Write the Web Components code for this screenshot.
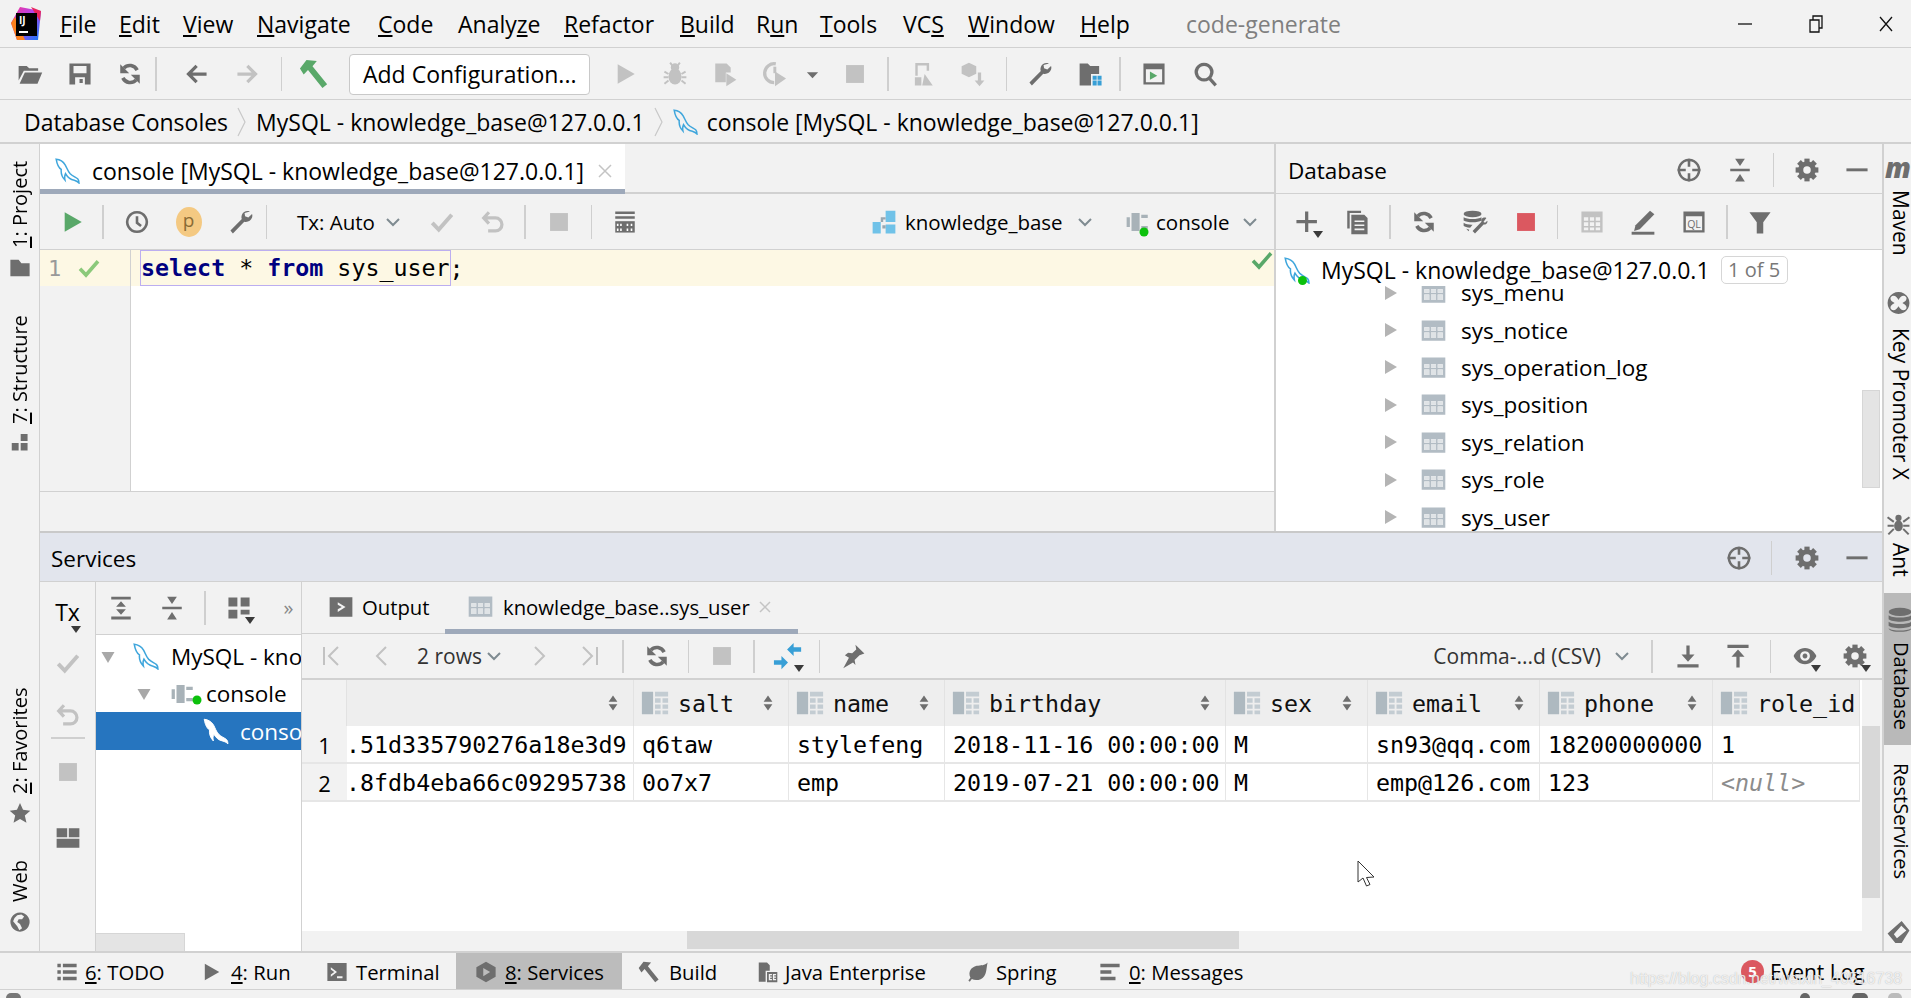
<!DOCTYPE html>
<html>
<head>
<meta charset="utf-8">
<title>code-generate</title>
<style>
    html, body { margin: 0; height: 100%; overflow: hidden; background: #f2f2f2; }
    body { font: 23px "Open Sans", "Noto Sans", sans-serif; color: #000; }
</style>
</head>
<body>
<ide-app>
    <title-bar></title-bar>

    <tool-bar style="height:52px;padding:1px 0 0 5px;border-bottom:1px solid #d1d1d1">
        <icon-btn icon="open"></icon-btn><icon-btn icon="save"></icon-btn><icon-btn icon="sync"></icon-btn>
        <tool-sep style="margin-right:14px"></tool-sep>
        <icon-btn icon="back"></icon-btn><icon-btn icon="forward" dim style="margin-left:2px"></icon-btn>
        <tool-sep style="margin:0 7px 0 8px"></tool-sep>
        <icon-btn icon="hammer" color="#59a869" size="30"></icon-btn>
        <config-button style="margin-left:10px">Add Configuration...</config-button>
        <icon-btn icon="play" dim style="margin-left:10px"></icon-btn>
        <icon-btn icon="bug" dim></icon-btn><icon-btn icon="coverage" dim></icon-btn><icon-btn icon="profiler" dim></icon-btn>
        <icon-btn icon="drop" w="24" color="#6e6e6e"></icon-btn>
        <icon-btn icon="stop" dim style="margin-left:6px"></icon-btn>
        <tool-sep style="margin:0 9px 0 7px"></tool-sep>
        <icon-btn icon="device" dim></icon-btn><icon-btn icon="pkgdown" dim></icon-btn>
        <tool-sep style="margin:0 8px"></tool-sep>
        <icon-btn icon="wrench"></icon-btn><icon-btn icon="structure" style="margin-left:1px"></icon-btn>
        <tool-sep style="margin:0 8px 0 3px"></tool-sep>
        <icon-btn icon="runany"></icon-btn><icon-btn icon="search" style="margin-left:2px"></icon-btn>
    </tool-bar>

    <nav-bar>
        <nav-crumb>Database Consoles</nav-crumb>
        <nav-crumb sep>MySQL - knowledge_base@127.0.0.1</nav-crumb>
        <nav-crumb sep icon>console [MySQL - knowledge_base@127.0.0.1]</nav-crumb>
    </nav-bar>

    <ide-body>
        <side-stripe slot="left" flip>
            <stripe-label flip style="margin-top:16px;height:88px"><u>1</u>: Project</stripe-label>
            <ide-icon name="folder" size="22" style="margin-top:9px"></ide-icon>
            <stripe-label flip style="margin-top:36px;height:110px"><u>7</u>: Structure</stripe-label>
            <ide-icon name="squares" size="22" style="margin-top:7px"></ide-icon>
            <stripe-label flip style="margin-top:234px;height:106px"><u>2</u>: Favorites</stripe-label>
            <ide-icon name="star" size="22" style="margin-top:8px"></ide-icon>
            <stripe-label flip style="margin-top:36px;height:43px">Web</stripe-label>
            <ide-icon name="globe" size="22" style="margin-top:8px"></ide-icon>
        </side-stripe>

        <top-split>
            <editor-pane></editor-pane>
            <database-pane></database-pane>
        </top-split>
        <services-pane></services-pane>

        <side-stripe slot="right">
            <stripe-m style="margin-top:15px"></stripe-m>
            <stripe-label style="margin-top:13px;height:63px">Maven</stripe-label>
            <ide-icon name="keyx" size="26" style="margin-top:37px"></ide-icon>
            <stripe-label style="margin-top:12px;height:149px">Key Promoter X</stripe-label>
            <ide-icon name="ant" size="26" style="margin-top:35px"></ide-icon>
            <stripe-label style="margin-top:5px;height:32px">Ant</stripe-label>
            <stripe-active style="margin-top:18px">
                <ide-icon name="dbstack" size="26" style="margin:14px 0 0 3px"></ide-icon>
                <stripe-label style="margin-top:9px;height:85px;font-size:20px">Database</stripe-label>
            </stripe-active>
            <stripe-label style="margin-top:18px;height:115px;font-size:20px">RestServices</stripe-label>
            <ide-icon name="rest" size="26" style="margin-top:41px"></ide-icon>
        </side-stripe>
    </ide-body>

    <bottom-bar>
        <bar-item icon="list" style="width:200px;padding-left:56px;gap:7px"><u>6</u>: TODO</bar-item>
        <bar-item icon="play" style="width:126px;gap:9px"><u>4</u>: Run</bar-item>
        <bar-item icon="terminal" style="width:130px;gap:8px">Terminal</bar-item>
        <bar-item icon="services" active style="width:166px;padding-left:19px;gap:8px"><u>8</u>: Services</bar-item>
        <bar-item icon="hammer" style="width:134px;padding-left:16px;gap:9px">Build</bar-item>
        <bar-item icon="javaee" style="width:211px;gap:7px">Java Enterprise</bar-item>
        <bar-item icon="leaf" style="width:132px;gap:7px">Spring</bar-item>
        <bar-item icon="messages" style="gap:8px"><u>0</u>: Messages</bar-item>
        <event-log style="margin-left:auto">Event Log</event-log>
    </bottom-bar>
    <status-strip></status-strip>
    <water-mark>https://blog.csdn.net/weixin_40516738</water-mark>
    <mouse-cursor></mouse-cursor>
</ide-app>

<script>
(() => {
    'use strict';
    const UI = '"Open Sans", "Noto Sans", sans-serif';
    const MONO = '"DejaVu Sans Mono", "Liberation Mono", monospace';

    // 16x16 icons, same grid as the IDE's own set
    const line = (d, w = 2) => `<path d="${d}" fill="none" stroke="currentColor" stroke-width="${w}"/>`;
    const dolphin = 'M1.5 1.5c2 .2 3.8 1.3 4.8 3 .9 1.6 1.3 3.3 2.7 4.8 1.3 1.3 3 1.8 4 2.7.5.5.7 1.2.7 2.2-.7-.8-1.6-1.1-2.5-1.4-2.5-.5-3.8-2-4.7-3.6-.5 1-.6 2-.3 3.5C4.6 11 4 9 4.2 7 3 6.3 2 4.5 1.5 1.5z';
    const gearBody = '<mask id="g"><g fill="#fff"><circle cx="8" cy="8" r="5.4"/><rect x="6.4" y="1" width="3.2" height="14"/><rect x="6.4" y="1" width="3.2" height="14" transform="rotate(45 8 8)"/><rect x="6.4" y="1" width="3.2" height="14" transform="rotate(90 8 8)"/><rect x="6.4" y="1" width="3.2" height="14" transform="rotate(135 8 8)"/></g><circle cx="8" cy="8" r="2.3" fill="#000"/></mask><rect width="16" height="16" mask="url(#g)"/>';
    const ICONS = {
        open: '<path d="M1 3h5l1.5 1.5H13V6H4.2L1 12z"/><path d="M4.8 7h10.7l-2.9 7H1.6z"/>',
        save: '<path fill-rule="evenodd" d="M1.5 1.5h13v13h-13zM4 3v4.5h8V3zM5 10v4.5h6V10zM7.7 11h2v2.5h-2z"/>',
        sync: line('M12.4 5.6A5 5 0 0 0 4.2 4.4', 2.2) + line('M3.6 10.4a5 5 0 0 0 8.2 1.2', 2.2) + '<path d="M2 2v5.500h5.500zM14 14V8.500H8.500z"/>',
        back: line('M14.5 8H4M8.4 3 3.4 8l5 5'),
        forward: line('M1.5 8H12M7.6 3l5 5-5 5'),
        hammer: '<path d="M4 .5 9.500 1 7.200 3.800 15 13.500 12.500 15.500 4.800 5.800 2.500 8.300.5 5z"/>',
        play: '<path d="M3.5 2 14 8 3.5 14z"/>',
        bug: '<ellipse cx="8" cy="9.5" rx="4" ry="5"/><circle cx="8" cy="4" r="2.6"/>' + line('M1.5 6.5 4 8M14.5 6.5 12 8M1 10h3M15 10h-3M1.5 14 4 12M14.5 14 12 12M5 1l1.5 2M11 1 9.500 3', 1.2),
        coverage: '<path d="M2 1.500h7l2.500 2.500V7H8.500v6H2z"/><path d="M8.800 7.500 15 11.500l-6.200 4z"/>',
        profiler: line('M8.500 1.800a5.800 5.800 0 1 0-1 11.500', 2) + '<path d="M7 3.500h1.800v4H7z"/><path d="M8 6.500l6.800 4.300L8 15.500z"/>',
        drop: '<path d="M2 5.500h12L8 12z"/>',
        stop: '<path d="M2.500 2.500h11v11h-11z"/>',
        device: line('M4 9V2h7v4', 1.5) + '<path d="M3 10h4v5H3zM9 8l5 7H7.500z"/>',
        pkgdown: '<path d="M5.500 1 10 3.200v4.600L5.500 10 1 7.800V3.200z"/><path d="M11 7h2v5h2l-3 3.500L9 12h2z"/>',
        wrench: '<path d="M13.500 1.500c-2-.8-4.300.2-5 2.200-.3 1-.3 1.800 0 2.500L1.500 13.200 3 15l7-7.200c2 .5 4.200-.5 4.800-2.500.3-1 .2-1.700 0-2.300l-2.300 2.300-2-.8-.3-2z"/>',
        structure: '<path d="M1 1.500h5L7.500 3H13v5H8v7H1z"/><path fill="#389fd6" d="M9 9h2.500v2.500H9zM12 9h2.500v2.500H12zM9 12h2.500v3H9zM12 12h2.500v3H12z"/>',
        runany: '<path fill-rule="evenodd" d="M1.500 1.500h13v13h-13zM3 5v8h10V5z"/><path fill="#59a869" d="M5.500 6.500 10 9l-4.500 2.500z"/>',
        search: line('M6.800 2a4.800 4.800 0 1 0 .01 0M10 10.500l4 4.500'),
        history: line('M8 2a6 6 0 1 0 .01 0M8 4.500V8.500l2.500 2', 1.600),
        check: line('M2 8.500l4 4.200L14 3.500', 2.400),
        undo: line('M5.500 2 2.300 5.500 5.500 9M2.500 5.500h7a4 4 0 0 1 0 8H5'),
        results: '<path d="M2 1.500h12V3H2zM2 4.500h12V6H2z"/><path d="M2 7.500h12v7H2z"/><path fill="#fff" d="M5 9h1v1.500H5zM9 9h1v1.500H9zM5 12h1v1.500H5zM9 12h1v1.500H9zM3 9h1v1.500H3zM11.500 9h1v1.500h-1zM3 12h1v1.500H3zM11.500 12h1v1.500h-1z"/>',
        schema: '<path fill="#70c2e8" d="M1 8h5v7H1zM9 1h6v7H9zM9 9.500h6V15H9z"/><path fill="#9aa7b0" d="M6 5h3v1.500H7.500V8H6zM7 10h2v2H7z"/>',
        plug: '<path d="M1 5h2v6H1zM4 2.500h5v11H4zM10 3.500h4v2h-4zM10 10.500h4v2h-4z"/>',
        target: line('M8 1.800a6.200 6.200 0 1 0 .01 0', 1.500) + '<path d="M7.200 1h1.600v5H7.200zM7.200 10h1.600v5H7.200zM1 7.200h5v1.600H1zM10 7.200h5v1.600h-5z"/>',
        collapse: '<path d="M5 1h6L8 5.500zM2 7.200h12v1.600H2zM8 10.500l3 4.500H5z"/>',
        expand: '<path d="M2 1h12v1.800H2zM2 13.200h12V15H2zM8 3.800l3 3.400H5zM8 12.200 5 8.800h6z"/>',
        gear: gearBody,
        minus: '<path d="M1.500 7h13v1.800h-13z"/>',
        plus: '<path d="M6.800 1.500h2v5.300h5.300v2H8.800v5.300h-2V8.800H1.500v-2h5.300z"/>',
        copy: '<path fill-rule="evenodd" d="M4.500 3.500h8l2 2v10h-10zM6.500 7v1h6V7zM6.500 9.500v1h6v-1zM6.500 12v1h6v-1z"/><path d="M2 1h8.500v1.500H3.500V12H2z"/>',
        dbtool: '<ellipse cx="6.500" cy="3" rx="5.500" ry="2"/><path d="M1 5c2 1.500 9 1.500 11 0v2c-2 1.500-9 1.500-11 0zM1 8.500c1.500 1 3.500 1.300 5.500 1.200L5 11.500c-2 0-3.200-.6-4-1.200zM2.500 12c.8.500 1.500.6 2 .7l-.5 1z"/><path d="M15 5.500c-.8-.5-2.200-.3-2.800.5-.4.600-.4 1.200-.2 1.800L6.500 13.500 8 15l5.300-5.500c.8.200 1.800 0 2.200-1 .2-.5.200-1 .1-1.300l-1.400 1.300-1-.5z"/>',
        grid: '<path fill-rule="evenodd" d="M1.500 1.500h13v13h-13zM3 5v2.200h2.700V5zM6.700 5v2.200h2.600V5zM10.300 5v2.200H13V5zM3 8.200v2.200h2.700V8.200zM6.700 8.200v2.200h2.600V8.200zM10.300 8.200v2.200H13V8.200zM3 11.400V13h2.700v-1.600zM6.700 11.400V13h2.600v-1.600zM10.300 11.400V13H13v-1.600z"/>',
        edit: '<path d="M12.300 1 15 3.300 6 12.500l-3.500 1 .9-3.500z"/><path d="M1 14h14v1.800H1z"/>',
        ql: '<path fill-rule="evenodd" d="M1.500 1.500h13v13h-13zM3 4.500V13h10V4.500z"/><text x="8" y="11.500" font-size="6.500" text-anchor="middle" font-family="Open Sans, sans-serif">QL</text>',
        filter: '<path d="M1.500 2h13L10 8.200V15H6V8.200z"/>',
        table: '<path fill="#b2bcc4" fill-rule="evenodd" d="M1 2h14v12H1zM2.500 6v2.200h3V6zM6.500 6v2.200h3V6zM10.500 6v2.200h3V6zM2.500 9.200v3.300h3V9.200zM6.500 9.200v3.300h3V9.200zM10.500 9.200v3.300h3V9.200z"/><path fill="#dfe3e6" d="M2.500 6h3v2.200h-3zM6.500 6h3v2.200h-3zM10.500 6h3v2.200h-3zM2.500 9.200h3v3.300h-3zM6.500 9.200h3v3.300h-3zM10.500 9.200h3v3.300h-3z"/>',
        column: '<path fill="#aeb9c0" d="M1 2h6v12H1z"/><path fill="#c3ccd2" d="M8 2h7v2.500H8zM8 5.500h3v2.300H8zM12 5.500h3v2.300h-3zM8 8.800h3v2.300H8zM12 8.800h3v2.300h-3zM8 12h3v2H8zM12 12h3v2h-3z"/>',
        sort: '<path d="M8 2l3.500 5h-7zM8 14 4.500 9h7z"/>',
        output: '<path fill-rule="evenodd" d="M1 2h14v12H1zM6 5v1.600L8.500 8 6 9.400V11l4.800-3z"/>',
        folder: '<path d="M1 2h6l2 2.500h6V14H1z"/>',
        squares: '<path d="M8.500 1.500h5v5h-5zM2 8h5v5.500H2zM8.500 8h5v5.500h-5z"/>',
        group: '<path d="M1.500 1.500h5.500v5.500H1.500zM9 1.500h5.500v5.500H9zM1.500 9h5.500v5.500H1.500zM9 9h5.500v3H9z"/>',
        layout: '<path d="M1 2h6.500v5.500H1zM8.500 2H15v5.500H8.500zM1 8.500h14V14H1z"/>',
        merge: '<path fill="#389fd6" d="M7.500 4.500 11 1v7zM10.500 3.300h4.500v2.400h-4.500zM8 11.500 4.500 15V8zM.5 10.300H5v2.400H.5z"/>',
        star: '<path d="M8 .8 10.200 5.700l5.300.6-4 3.500 1.200 5.200L8 12.300 3.300 15l1.200-5.200-4-3.500 5.300-.6z"/>',
        globe: '<path fill-rule="evenodd" d="M8 1a7 7 0 1 0 .01 0zM6 3l3-.5 2 1.500-1.500 2H7l-1 2 2 1.500 1.500 3-2 1.500L6 11 3 7.500 4 5z"/>',
        keyx: '<path fill-rule="evenodd" d="M8 1a7 7 0 1 0 .01 0zM4 3.500C6 3 7 4.500 8 6c1-1.500 2-3 4-2.500 1.500.5 1.500 2.500 0 3.500L10.500 8 12 9c1.500 1 1.500 3 0 3.500-2 .5-3-1-4-2.500-1 1.500-2 3-4 2.500C2.500 12 2.500 10 4 9l1.500-1L4 7C2.500 6 2.500 4 4 3.500z"/>',
        ant: '<ellipse cx="8" cy="8.500" rx="2.800" ry="3.500"/><circle cx="8" cy="3.500" r="2"/>' + line('M1 3l4 3M15 3l-4 3M1 8.500h4M15 8.500h-4M1.500 14 5 10.500M14.500 14 11 10.500', 1.300),
        dbstack: '<ellipse cx="8" cy="3" rx="7" ry="2.500"/><path d="M1 5c2 2 12 2 14 0v2.500c-2 2-12 2-14 0zM1 9c2 2 12 2 14 0v2.500c-2 2-12 2-14 0zM1 13c2 2 12 2 14 0 0 3-14 3-14 0z"/>',
        rest: '<path fill-rule="evenodd" d="M10 1 15 7l-5 8H6L1 9zM9.800 4 5 9.500 7 12l6-5z"/>',
        list: '<path d="M1 2h2.500v2.500H1zM5 2h10v2.500H5zM1 6.700h2.500v2.500H1zM5 6.700h10v2.500H5zM1 11.500h2.500V14H1zM5 11.500h10V14H5z"/>',
        terminal: '<path fill-rule="evenodd" d="M1 1.500h14v13H1zM3.500 4.500v1.600L6 8 3.500 9.800v1.700L8 8zM8 11v1.500h4V11z"/>',
        services: '<path fill-rule="evenodd" d="M8 .5 15 4.500v7l-7 4-7-4v-7zM6 5v6l5-3z"/>',
        javaee: '<path d="M2 1h6l2 2v4H7v8H2z"/><path fill-rule="evenodd" d="M8 8h7.500v7.500H8zM9.300 9.500v4.500h2.300v-1h-1.300v-.8h1.200v-.9h-1.200v-.9h1.300v-.9zM12.300 9.500v4.500h2.300v-1h-1.300v-.8h1.200v-.9h-1.200v-.9h1.300v-.9z"/>',
        leaf: '<path d="M15 1c-1 4-.5 7-2.500 10C10.500 14 6 14.500 3.500 13L2 15l-1-.8 1.500-2C.5 8 3 4.500 7 3.500c3-.7 6 0 8-2.500z"/>',
        messages: '<path d="M1 2h14v2.500H1zM1 6.700h8v2.500H1zM1 11.500h11V14H1z"/>',
        dolphin: `<g transform="translate(-1 -1) scale(1.15)"><path d="${dolphin}" fill="none" stroke="#3fa6dc" stroke-width=".8"/></g>`,
        dolphinw: `<g transform="translate(-1 -1) scale(1.15)"><path d="${dolphin}" fill="#fff" stroke="#fff" stroke-width=".5"/></g>`,
        tri: '<path d="M3 2l10 6-10 6z"/>',
        tridown: '<path d="M1.500 3h13L8 14z"/>',
        download: '<path d="M7 1.500h2V7h3l-4 4.500L4 7h3zM1.500 13h13v2h-13z"/>',
        upload: '<path d="M1.500 1h13v2h-13zM8 4l4 4.500H9V15H7V8.500H4z"/>',
        eye: '<path fill-rule="evenodd" d="M8 3c3.500 0 6 2.500 7 5-1 2.500-3.500 5-7 5s-6-2.500-7-5c1-2.500 3.500-5 7-5zm0 2a3 3 0 1 0 .01 0zm0 1.500a1.500 1.500 0 1 1-.01 0z"/>',
        pin: '<path d="M9.500 1 15 6.500l-3 1-3 3 .5 3L8 12 2 15.500 5.500 9 3 7.500l2-1.500 2.500.3 2.500-2.300z"/>'
    };

    const define = (name, css, html, onConnect) => {
        customElements.define(name, class extends HTMLElement {
            connectedCallback() {
                if (this.shadowRoot) return;
                const root = this.attachShadow({mode: 'open'});
                const body = typeof html === 'function' ? html(this) : html;
                root.innerHTML = `<style>${css}</style>${body}`;
                if (onConnect) onConnect(this, root);
            }
        });
    };

    define('ide-icon', `
        :host { display: inline-flex; flex: none; color: #6e6e6e; }
        svg { display: block; fill: currentColor; }
    `, el => {
        const size = el.getAttribute('size') || 26;
        if (el.getAttribute('color')) el.style.color = el.getAttribute('color');
        return `<svg width="${size}" height="${size}" viewBox="0 0 16 16">${ICONS[el.getAttribute('name')] || ''}</svg>`;
    });

    define('icon-btn', `
        :host { position: relative; display: flex; flex: none; align-items: center; justify-content: center; width: 50px; height: 100%; }
        ::slotted(svg) { flex: none; }
        .caret { position: absolute; left: calc(50% + 6px); top: calc(50% + 9px); width: 0; height: 0;
                 border: 5px solid transparent; border-top: 7px solid #3a3a3a; border-bottom: 0; }
    `, el => {
        if (el.getAttribute('w')) el.style.width = el.getAttribute('w') + 'px';
        const color = el.hasAttribute('dim') ? '#c2c2c2' : (el.getAttribute('color') || '#6e6e6e');
        const size = el.getAttribute('size') || 26;
        const name = el.getAttribute('icon');
        let icon = '';
        if (name === 'drop') icon = `<ide-icon name="drop" size="15" color="${color}"></ide-icon>`;
        else if (name) icon = `<ide-icon name="${name}" size="${size}" color="${color}"></ide-icon>`;
        return icon + '<slot></slot>' + (el.hasAttribute('caret') ? '<span class="caret"></span>' : '');
    });

    define('tool-bar', `
        :host { display: flex; align-items: center; box-sizing: border-box; font: 20px ${UI}; }
    `, '<slot></slot>');

    define('tool-sep', `
        :host { display: block; flex: none; width: 1.5px; height: 34px; background: #cfcfcf; }
    `, '');

    define('ide-app', `
        :host { position: relative; display: flex; flex-direction: column; width: 1911px; height: 998px; overflow: hidden; }
    `, '<slot></slot>');

    define('title-bar', `
        :host { display: flex; align-items: center; flex: none; height: 48px; box-sizing: border-box; border-bottom: 1.500px solid #d1d1d1; }
        .logo { width: 60px; flex: none; padding-left: 11px; box-sizing: border-box; }
        .logo svg { display: block; }
        .menu { display: grid; grid-template-columns: 59px 64px 74px 121px 80px 106px 116px 76px 64px 83px 65px 112px 106px; font: 23px ${UI}; }
        .title { color: #7f7f7f; font: 23px ${UI}; }
        .win { margin-left: auto; display: grid; grid-template-columns: 50px 91px 50px; align-items: center; justify-items: center; }
        svg.w { fill: none; stroke: #111; stroke-width: 1.300; }
        u { text-underline-offset: 2px; }
    `, `
        <div class="logo"><svg width="30" height="33" viewBox="0 0 30 33">
            <defs><linearGradient id="a" x1="0" y1="0" x2="1" y2="1"><stop offset="0" stop-color="#f9328b"/><stop offset=".45" stop-color="#b345f1"/><stop offset="1" stop-color="#0d7bf7"/></linearGradient></defs>
            <path d="M9 0 30 4 27 33 6 33 0 16z" fill="url(#a)"/><path d="M0 16 6 33 14 33 4 10z" fill="#fc801d"/><path d="M20 0 30 4 29 14z" fill="#e9255f"/>
            <rect x="5" y="6" width="21" height="23"/><text x="8" y="17" font-size="10" font-weight="700" fill="#fff" font-family="Open Sans, sans-serif">IJ</text><rect x="8" y="24" width="9" height="2" fill="#fff"/>
        </svg></div>
        <div class="menu">
            <span><u>F</u>ile</span><span><u>E</u>dit</span><span><u>V</u>iew</span><span><u>N</u>avigate</span><span><u>C</u>ode</span><span>Analy<u>z</u>e</span><span><u>R</u>efactor</span><span><u>B</u>uild</span><span>R<u>u</u>n</span><span><u>T</u>ools</span><span>VC<u>S</u></span><span><u>W</u>indow</span><span><u>H</u>elp</span>
        </div>
        <span class="title">code-generate</span>
        <div class="win">
            <svg class="w" width="16" height="16" viewBox="0 0 16 16"><path d="M1 8h14"/></svg>
            <svg class="w" width="16" height="18" viewBox="0 0 16 18"><path d="M2 5h9v12H2zM5 5V1h9v12h-3"/></svg>
            <svg class="w" width="16" height="18" viewBox="0 0 16 18"><path d="M2 2l12 14M14 2 2 16"/></svg>
        </div>
    `);

    define('config-button', `
        :host { display: flex; align-items: center; box-sizing: border-box; width: 241px; height: 41px; padding-left: 13px;
                background: #fff; border: 1.500px solid #c9c9c9; border-radius: 4px; font: 23px ${UI}; white-space: nowrap; }
    `, '<slot></slot>');

    define('nav-bar', `
        :host { display: flex; align-items: center; flex: none; height: 44px; box-sizing: border-box; padding: 2px 0 0 24px;
                border-bottom: 2px solid #d1d1d1; font: 23px ${UI}; }
    `, '<slot></slot>');

    define('nav-crumb', `
        :host { display: flex; align-items: center; white-space: nowrap; }
        .sep { margin: 0 10px 0 9px; flex: none; }
        .ic { margin: 0 8px 0 0; }
    `, el => `${el.hasAttribute('sep') ? '<svg class="sep" width="9" height="30" viewBox="0 0 9 30"><path d="M1 1l7 14-7 14" fill="none" stroke="#c8c8c8" stroke-width="1.200"/></svg>' : ''}${el.hasAttribute('icon') ? '<ide-icon class="ic" name="dolphin" size="26"></ide-icon>' : ''}<slot></slot>`);

    define('ide-body', `
        :host { display: grid; flex: 1; min-height: 0; grid-template-columns: 40px 1fr 29px; grid-template-rows: 389px minmax(0, 1fr); }
        ::slotted([slot=left]) { grid-row: 1 / 3; grid-column: 1; }
        ::slotted([slot=right]) { grid-row: 1 / 3; grid-column: 3; }
    `, `<slot name="left"></slot><slot></slot><slot name="right"></slot>`);

    define('side-stripe', `
        :host { display: flex; flex-direction: column; align-items: center; box-sizing: border-box; min-width: 0; overflow: hidden; font: 20px ${UI}; }
        :host([slot=left]) { border-right: 1.500px solid #d1d1d1; }
        :host([slot=right]) { border-left: 2px solid #d1d1d1; align-items: stretch; font-size: 21px; }
        :host([slot=right]) ::slotted(ide-icon) { margin-left: 2px; }
        :host([slot=right]) ::slotted(stripe-label) { width: 20px; line-height: 20px; margin-left: 7px; }
    `, '<slot></slot>');

    define('stripe-label', `
        :host { display: block; flex: none; writing-mode: vertical-rl; white-space: nowrap; text-align: center; line-height: 30px; width: 30px; }
        :host([flip]) { transform: rotate(180deg); }
    `, '<slot></slot>');

    define('stripe-m', `
        :host { display: block; flex: none; height: 18px; padding-left: 1px; color: #6e6e6e; font: italic 800 28px/16px ${UI}; }
    `, 'm');

    define('stripe-active', `
        :host { display: flex; flex-direction: column; align-items: flex-start; flex: none; height: 152px; background: #b9b9b9; }
        ::slotted(stripe-label) { width: 20px; line-height: 20px; margin-left: 7px; }
    `, '<slot></slot>');

    define('top-split', `
        :host { display: flex; min-width: 0; min-height: 0; border-bottom: 2px solid #c9c9c9; }
    `, '<slot></slot>');

    define('editor-pane', `
        :host { display: flex; flex-direction: column; width: 1236px; flex: none; box-sizing: border-box; border-right: 2px solid #d1d1d1; }
        .tabs { display: flex; height: 50px; flex: none; border-bottom: 2px solid #d1d1d1; box-sizing: border-box; }
        .tab { display: flex; align-items: center; box-sizing: border-box; width: 585px; height: 50px; padding: 8px 0 0 15px; gap: 11px;
               background: #fff; border-bottom: 5px solid #9ea9ba; font: 23px ${UI}; white-space: nowrap; }
        .x { margin-left: 3px; }
        tool-bar { height: 56px; flex: none; padding: 1px 0 0 7px; border-bottom: 1.500px solid #d1d1d1; font-size: 20.500px; }
        .lbl { width: 78px; margin-left: 0; white-space: nowrap; }
        .pick { white-space: nowrap; }
        .p { position: absolute; inset: 0; margin: auto; width: 26px; height: 30px; border-radius: 50%; background: #f4c982; color: #8a6b35; font: 19px/27px ${UI}; text-align: center; }
        .edit { display: flex; flex: 1; min-height: 0; background: #fff; }
        .gutter { width: 91px; flex: none; box-sizing: border-box; background: #f2f2f2; border-right: 1.500px solid #d1d1d1; }
        .gline { display: flex; align-items: center; height: 36px; background: #fdf8e4; color: #999; font: 22px ${MONO}; padding-left: 8px; gap: 15px; }
        .code { flex: 1; min-width: 0; }
        .cline { display: flex; align-items: center; position: relative; height: 36px; background: #fdf8e4; padding-left: 10px; box-sizing: border-box; font: 23.300px ${MONO}; white-space: pre; }
        .hl { outline: 1.500px solid #bcaef0; outline-offset: 0; height: 34px; line-height: 34px; }
        b { color: #000080; }
        .ok { position: absolute; right: 0; top: -2px; }
        .foot { height: 40px; flex: none; border-top: 1.500px solid #d1d1d1; box-sizing: border-box; }
    `, `
        <div class="tabs"><div class="tab"><ide-icon name="dolphin" size="26"></ide-icon>console [MySQL - knowledge_base@127.0.0.1]
            <svg class="x" width="14" height="14" viewBox="0 0 14 14"><path d="M1 1l12 12M13 1 1 13" stroke="#c4c4c4" stroke-width="1.500"/></svg></div></div>
        <tool-bar>
            <icon-btn icon="play" color="#59a869"></icon-btn>
            <tool-sep style="margin:0 8px 0 5px"></tool-sep>
            <icon-btn icon="history"></icon-btn>
            <icon-btn style="margin-left:2px"><span class="p">p</span></icon-btn>
            <icon-btn icon="wrench" style="margin-left:2px"></icon-btn>
            <tool-sep style="margin-right:30px"></tool-sep>
            <span class="lbl">Tx: Auto</span>
            <icon-btn w="20" style="margin-left:8px"><svg width="14" height="9" viewBox="0 0 14 9"><path d="M1 1l6 6 6-6" fill="none" stroke="#7f8b91" stroke-width="2"/></svg></icon-btn>
            <icon-btn icon="check" dim style="margin-left:14px"></icon-btn>
            <icon-btn icon="undo" dim style="margin-left:1px"></icon-btn>
            <tool-sep style="margin:0 8px 0 6px"></tool-sep>
            <icon-btn icon="stop" dim></icon-btn>
            <tool-sep style="margin:0 8px 0 7px"></tool-sep>
            <icon-btn icon="results"></icon-btn>
            <icon-btn icon="schema" w="26" style="margin-left:auto"></icon-btn>
            <span class="pick" style="width:157px;margin-left:8px">knowledge_base</span>
            <icon-btn w="20" style="margin-left:13px"><svg width="14" height="9" viewBox="0 0 14 9"><path d="M1 1l6 6 6-6" fill="none" stroke="#7f8b91" stroke-width="2"/></svg></icon-btn>
            <icon-btn icon="plug" w="26" color="#a8b2b8" style="margin-left:30px"><svg style="position:absolute;left:14px;top:32px" width="10" height="10"><circle cx="5" cy="5" r="4.500" fill="#0cc10c"/></svg></icon-btn>
            <span class="pick" style="width:73px;margin-left:5px">console</span>
            <icon-btn w="20" style="margin:0 14px 0 11px"><svg width="14" height="9" viewBox="0 0 14 9"><path d="M1 1l6 6 6-6" fill="none" stroke="#7f8b91" stroke-width="2"/></svg></icon-btn>
        </tool-bar>
        <div class="edit">
            <div class="gutter"><div class="gline"><span style="width:14px">1</span><ide-icon name="check" size="24" color="#8bc97a"></ide-icon></div></div>
            <div class="code"><div class="cline"><span class="hl"><b>select</b> * <b>from</b> sys_user</span>;<ide-icon class="ok" name="check" size="24" color="#59a869"></ide-icon></div></div>
        </div>
        <div class="foot"></div>
    `);

    define('pane-head', `
        :host { display: flex; align-items: center; flex: none; box-sizing: border-box; font: 22.500px ${UI}; }
    `, '<slot></slot>');

    define('tree-row', `
        :host { display: flex; align-items: center; height: 37.400px; flex: none; font: 22.500px ${UI}; white-space: nowrap; }
        .a { width: 22px; flex: none; display: flex; justify-content: center; }
        .i { margin-left: 18px; margin-right: 14px; }
    `, el => `<span class="a"><svg width="14" height="16" viewBox="0 0 14 16"><path d="M1 1l12 7L1 15z" fill="#b4b4b4"/></svg></span><ide-icon class="i" name="table" size="27"></ide-icon><slot></slot>`);

    define('database-pane', `
        :host { display: flex; flex-direction: column; flex: 1; min-width: 0; }
        pane-head { height: 50px; padding: 3px 0 0 12px; border-bottom: 1.500px solid #d1d1d1; }
        tool-bar { height: 56px; flex: none; padding: 1px 0 0 6px; border-bottom: 1.500px solid #d1d1d1; }
        .tree { position: relative; flex: 1; min-height: 0; overflow: hidden; background: #fff; }
        .top { position: relative; z-index: 1; display: flex; align-items: center; box-sizing: border-box; height: 36px; padding: 4px 0 0 8px; background: #fff; font: 23px ${UI}; white-space: nowrap; }
        .dot { position: absolute; left: 22px; top: 26px; width: 9px; height: 9px; border-radius: 50%; background: #0cc10c; }
        .badge { margin-left: 11px; width: 67px; box-sizing: border-box; height: 28px; line-height: 25px; text-align: center; border: 1.500px solid #d6d6d6; border-radius: 5px; color: #787878; font-size: 20px; }
        .rows { margin-top: -12px; padding-left: 104px; }
        .bar { position: absolute; right: 2px; top: 140px; width: 18px; height: 98px; background: #e4e4e4; border: 1px solid #d6d6d6; box-sizing: border-box; }
    `, `
        <pane-head>Database
            <icon-btn icon="target" style="margin-left:auto"></icon-btn><icon-btn icon="collapse" style="margin-left:1px"></icon-btn>
            <tool-sep style="margin:0 8px"></tool-sep>
            <icon-btn icon="gear" w="50"></icon-btn><icon-btn icon="minus"></icon-btn>
        </pane-head>
        <tool-bar>
            <icon-btn icon="plus" caret></icon-btn><icon-btn icon="copy"></icon-btn>
            <tool-sep style="margin:0 8px 0 7px"></tool-sep>
            <icon-btn icon="sync"></icon-btn><icon-btn icon="dbtool" style="margin-left:1px"></icon-btn>
            <icon-btn icon="stop" color="#db5860" style="margin-left:1px"></icon-btn>
            <tool-sep style="margin:0 9px 0 6px"></tool-sep>
            <icon-btn icon="grid" dim></icon-btn><icon-btn icon="edit" style="margin-left:1px"></icon-btn><icon-btn icon="ql" style="margin-left:1px"></icon-btn>
            <tool-sep style="margin:0 7px 0 7px"></tool-sep>
            <icon-btn icon="filter"></icon-btn>
        </tool-bar>
        <div class="tree">
            <div class="top"><ide-icon name="dolphin" size="27"></ide-icon><span class="dot"></span><span style="margin-left:10px">MySQL - knowledge_base@127.0.0.1</span><span class="badge">1 of 5</span></div>
            <div class="rows">
                <tree-row>sys_menu</tree-row><tree-row>sys_notice</tree-row><tree-row>sys_operation_log</tree-row><tree-row>sys_position</tree-row><tree-row>sys_relation</tree-row><tree-row>sys_role</tree-row><tree-row>sys_user</tree-row>
            </div>
            <div class="bar"></div>
        </div>
    `);

    define('data-grid', `
        :host { display: grid; grid-template-columns: 45px 287px 155px 156px 281px 142px 172px 173px 147px; grid-auto-rows: min-content; align-content: start; font: 23.300px ${MONO}; }
        .h { display: flex; align-items: center; position: relative; box-sizing: border-box; height: 46px; background: #eee; border-right: 1px solid #e2e2e2; padding-left: 6px; gap: 8px; color: #111; white-space: nowrap; overflow: hidden; }
        .h .s { position: absolute; right: 10px; top: 13px; }
        .c { box-sizing: border-box; height: 38px; line-height: 38px; padding-left: 8px; border-right: 1.500px solid #e6e6e6; border-bottom: 2px solid #e6e6e6; white-space: pre; overflow: hidden; background: #fff; }
        .c.clip { padding-left: 0; padding-right: 6px; }
        .c.clip span { display: block; overflow: hidden; text-indent: -1px; }
        .n { padding: 0; text-align: center; background: #f2f2f2; font: 22px/38px ${UI}; border-right: 0; border-bottom-color: #e6e6e6; }
        .h.n0 { padding: 0; background: #f2f2f2; }
        i { color: #8c8c8c; }
    `, () => {
        const cols = ['', 'salt', 'name', 'birthday', 'sex', 'email', 'phone', 'role_id'];
        const rows = [
            ['.51d335790276a18e3d99', 'q6taw', 'stylefeng', '2018-11-16 00:00:00', 'M', 'sn93@qq.com', '18200000000', '1'],
            ['.8fdb4eba66c0929573846', '0o7x7', 'emp', '2019-07-21 00:00:00', 'M', 'emp@126.com', '123', '<i>&lt;null&gt;</i>']
        ];
        const sort = '<ide-icon class="s" name="sort" size="20"></ide-icon>';
        let html = '<div class="h n0"></div>';
        cols.forEach(c => {
            const head = c ? `<ide-icon name="column" size="30"></ide-icon><span>${c}</span>` : '';
            html += `<div class="h">${head}${c === 'role_id' ? '' : sort}</div>`;
        });
        rows.forEach((r, i) => {
            html += `<div class="c n">${i + 1}</div>`;
            r.forEach((v, j) => { html += j === 0 ? `<div class="c clip"><span>${v}</span></div>` : `<div class="c">${v}</div>`; });
        });
        return html;
    });

    define('services-pane', `
        :host { display: flex; flex-direction: column; min-height: 0; min-width: 0; }
        pane-head { height: 49px; padding: 2px 0 0 11px; background: #e2e5ed; border-bottom: 1.500px solid #d1d1d1; }
        .body { flex: 1; display: flex; min-height: 0; }
        .tx { width: 56px; flex: none; box-sizing: border-box; display: flex; flex-direction: column; align-items: center; border-right: 1.500px solid #d1d1d1; }
        .tx .t { position: relative; height: 54px; font: 23px/60px ${UI}; }
        .tx .t:after { content: ""; position: absolute; left: 16px; top: 44px; border: 5px solid transparent; border-top: 7px solid #3a3a3a; border-bottom: 0; }
        .tx ide-icon { display: flex; }
        .tx hr { width: 34px; height: 1.500px; border: 0; background: #cfcfcf; margin: 9px 0 0; }
        .left { width: 206px; flex: none; box-sizing: border-box; display: flex; flex-direction: column; border-right: 1.500px solid #d1d1d1; overflow: hidden; }
        .left tool-bar { height: 53px; flex: none; border-bottom: 1.500px solid #d1d1d1; }
        .ltree { flex: 1; min-height: 0; background: #fff; padding-top: 3px; font: 22.500px ${UI}; white-space: nowrap; overflow: hidden; }
        .tr { display: flex; align-items: center; position: relative; height: 37px; }
        .tri { flex: none; }
        .sel { height: 38px; background: #2675bf; color: #fff; gap: 10px; }
        .lscroll { height: 18px; flex: none; background: #fff; }
        .lscroll div { width: 89px; height: 100%; box-sizing: border-box; background: #e4e4e4; border-top: 1px solid #d6d6d6; border-right: 1px solid #d6d6d6; }
        .right { flex: 1; min-width: 0; display: flex; flex-direction: column; }
        .rt { display: flex; align-items: center; height: 52px; flex: none; box-sizing: border-box; padding-top: 2px; border-bottom: 1.500px solid #d1d1d1; font: 20.300px ${UI}; position: relative; }
        .out { display: flex; align-items: center; box-sizing: border-box; width: 143px; height: 100%; padding: 0 0 3px 26px; gap: 8px; }
        .tb { position: relative; display: flex; align-items: center; height: 100%; box-sizing: border-box; padding-left: 22px; width: 353px; gap: 9px; border-bottom: 5px solid #9ea9ba; white-space: nowrap; margin-bottom: -1px; }
        .right tool-bar { height: 46px; flex: none; border-bottom: 2px solid #d1d1d1; font-size: 21px; }
        .right tool-sep { height: 33px; }
        .gridwrap { flex: 1; min-height: 0; display: flex; }
        .ga { flex: 1; min-width: 0; background: #fff; }
        .vs { width: 20px; flex: none; background: #f2f2f2; padding-top: 46px; box-sizing: border-box; }
        .vs div { width: 18px; height: 172px; background: #d8d8d8; }
        .hs { height: 20px; flex: none; background: #f2f2f2; padding-left: 385px; }
        .hs div { width: 552px; height: 18px; background: #d8d8d8; }
    `, `
        <pane-head>Services
            <icon-btn icon="target" style="margin-left:auto"></icon-btn>
            <tool-sep style="margin:0 10px 0 7px"></tool-sep>
            <icon-btn icon="gear"></icon-btn><icon-btn icon="minus"></icon-btn>
        </pane-head>
        <div class="body">
            <div class="tx">
                <span class="t">Tx</span>
                <ide-icon name="check" size="26" color="#c2c2c2" style="margin-top:14px"></ide-icon>
                <ide-icon name="undo" size="26" color="#c2c2c2" style="margin-top:26px"></ide-icon>
                <hr>
                <ide-icon name="stop" size="26" color="#c2c2c2" style="margin-top:20px"></ide-icon>
                <ide-icon name="layout" size="26" color="#6e6e6e" style="margin-top:40px"></ide-icon>
            </div>
            <div class="left">
                <tool-bar>
                    <icon-btn icon="expand"></icon-btn><icon-btn icon="collapse" w="52"></icon-btn>
                    <tool-sep style="margin:0 8px 0 6px"></tool-sep>
                    <icon-btn icon="group" caret></icon-btn>
                    <span style="color:#888;font-size:20px;margin-left:20px;line-height:30px">»</span>
                </tool-bar>
                <div class="ltree">
                    <div class="tr"><ide-icon class="tri" name="tridown" size="16" color="#a8a8a8" style="margin-left:4px"></ide-icon><ide-icon name="dolphin" size="27" style="margin-left:17px"></ide-icon><span style="margin-left:11px">MySQL - knowledge_base</span></div>
                    <div class="tr"><ide-icon class="tri" name="tridown" size="16" color="#a8a8a8" style="margin-left:40px"></ide-icon><ide-icon name="plug" size="26" color="#a8b2b8" style="margin-left:18px"></ide-icon><svg style="position:absolute;left:96px;top:20px" width="10" height="10"><circle cx="5" cy="5" r="4.500" fill="#0cc10c"/></svg><span style="margin-left:10px">console</span></div>
                    <div class="tr sel" style="box-sizing:border-box;padding-left:107px"><ide-icon name="dolphinw" size="27"></ide-icon><span>console</span></div>
                </div>
                <div class="lscroll"><div></div></div>
            </div>
            <div class="right">
                <div class="rt">
                    <div class="out"><ide-icon name="output" size="26"></ide-icon>Output</div>
                    <div class="tb"><ide-icon name="table" size="27"></ide-icon>knowledge_base..sys_user
                        <svg width="12" height="12" viewBox="0 0 12 12"><path d="M1 1l10 10M11 1 1 11" stroke="#c4c4c4" stroke-width="1.500"/></svg></div>
                </div>
                <tool-bar>
                    <icon-btn w="26" style="margin-left:17px"><svg width="20" height="22" viewBox="0 0 20 22"><path d="M2 2v18M16 2 7 11l9 9" fill="none" stroke="#c2c2c2" stroke-width="2"/></svg></icon-btn>
                    <icon-btn w="26" style="margin-left:23px"><svg width="14" height="22" viewBox="0 0 14 22"><path d="M12 2 3 11l9 9" fill="none" stroke="#c2c2c2" stroke-width="2"/></svg></icon-btn>
                    <span style="margin-left:23px;color:#333;white-space:nowrap;width:68px">2 rows</span>
                    <svg width="14" height="9" viewBox="0 0 14 9" style="margin-left:2px"><path d="M1 1l6 6 6-6" fill="none" stroke="#7f8b91" stroke-width="2"/></svg>
                    <icon-btn w="26" style="margin-left:26px"><svg width="14" height="22" viewBox="0 0 14 22"><path d="M2 2l9 9-9 9" fill="none" stroke="#c2c2c2" stroke-width="2"/></svg></icon-btn>
                    <icon-btn w="26" style="margin-left:23px"><svg width="20" height="22" viewBox="0 0 20 22"><path d="M18 2v18M4 2l9 9-9 9" fill="none" stroke="#c2c2c2" stroke-width="2"/></svg></icon-btn>
                    <tool-sep style="margin-left:20px"></tool-sep>
                    <icon-btn icon="sync" style="margin-left:8px"></icon-btn>
                    <tool-sep style="margin-left:6px"></tool-sep>
                    <icon-btn icon="stop" dim style="margin-left:8px"></icon-btn>
                    <tool-sep style="margin-left:6px"></tool-sep>
                    <icon-btn icon="merge" size="30" caret style="margin-left:8px"></icon-btn>
                    <tool-sep style="margin-left:6px"></tool-sep>
                    <icon-btn icon="pin" style="margin-left:8px"></icon-btn>
                    <span style="margin-left:auto;color:#333;white-space:nowrap">Comma-...d (CSV)</span>
                    <svg width="14" height="9" viewBox="0 0 14 9" style="margin-left:14px"><path d="M1 1l6 6 6-6" fill="none" stroke="#7f8b91" stroke-width="2"/></svg>
                    <tool-sep style="margin-left:22px"></tool-sep>
                    <icon-btn icon="download" style="margin-left:10px"></icon-btn><icon-btn icon="upload" style="margin-left:0"></icon-btn>
                    <tool-sep style="margin-left:7px"></tool-sep>
                    <icon-btn icon="eye" caret style="margin-left:9px"></icon-btn><icon-btn icon="gear" caret style="margin-right:2px"></icon-btn>
                </tool-bar>
                <div class="gridwrap"><div class="ga"><data-grid></data-grid></div><div class="vs"><div></div></div></div>
                <div class="hs"><div></div></div>
            </div>
        </div>
    `);

    define('bar-item', `
        :host { display: flex; align-items: center; flex: none; box-sizing: border-box; height: 100%; padding-top: 1px; white-space: nowrap; }
        :host([active]) { background: #bcbcbc; }
    `, el => `<ide-icon name="${el.getAttribute('icon')}" size="22"></ide-icon><span><slot></slot></span>`);

    define('bottom-bar', `
        :host { display: flex; flex: none; height: 39px; box-sizing: border-box; border-top: 2px solid #d1d1d1; border-bottom: 1.500px solid #d1d1d1; font: 20.300px ${UI}; }
    `, '<slot></slot>');

    define('event-log', `
        :host { display: flex; align-items: center; flex: none; width: 170px; gap: 6px; padding-top: 1px; font-size: 21px; white-space: nowrap; }
        .b { width: 23px; height: 23px; border-radius: 50%; background: #db5860; color: #fff; font: 700 15px/23px ${UI}; text-align: center; }
    `, '<span class="b">5</span><slot></slot>');

    define('status-strip', `
        :host { display: flex; flex: none; height: 8px; overflow: hidden; position: relative; }
        i { display: block; height: 10px; border-radius: 5px 5px 0 0; margin-top: 3px; }
    `, `<i style="width:15px;margin-left:6px;background:#777"></i><i style="width:10px;margin-left:1779px;background:#666"></i><i style="width:16px;margin-left:42px;background:#666"></i><i style="width:14px;margin-left:20px;background:#bbb"></i>`);

    define('water-mark', `
        :host { position: absolute; left: 1630px; top: 967px; font: 16px/24px "Liberation Sans", sans-serif; color: rgba(255,255,255,.8);
                text-shadow: 0 0 1px rgba(120,120,120,.6); white-space: nowrap; pointer-events: none; }
    `, '<slot></slot>');

    define('mouse-cursor', `
        :host { position: absolute; left: 1357px; top: 860px; width: 19px; height: 28px; }
        svg { display: block; }
    `, '<svg width="19" height="28" viewBox="0 0 19 28"><path d="M1 1v21l5-4 3.500 8 3.500-1.500L9.500 17.500 17 17z" fill="#fff" stroke="#333" stroke-width="1"/></svg>');
})();
</script>
</body>
</html>
